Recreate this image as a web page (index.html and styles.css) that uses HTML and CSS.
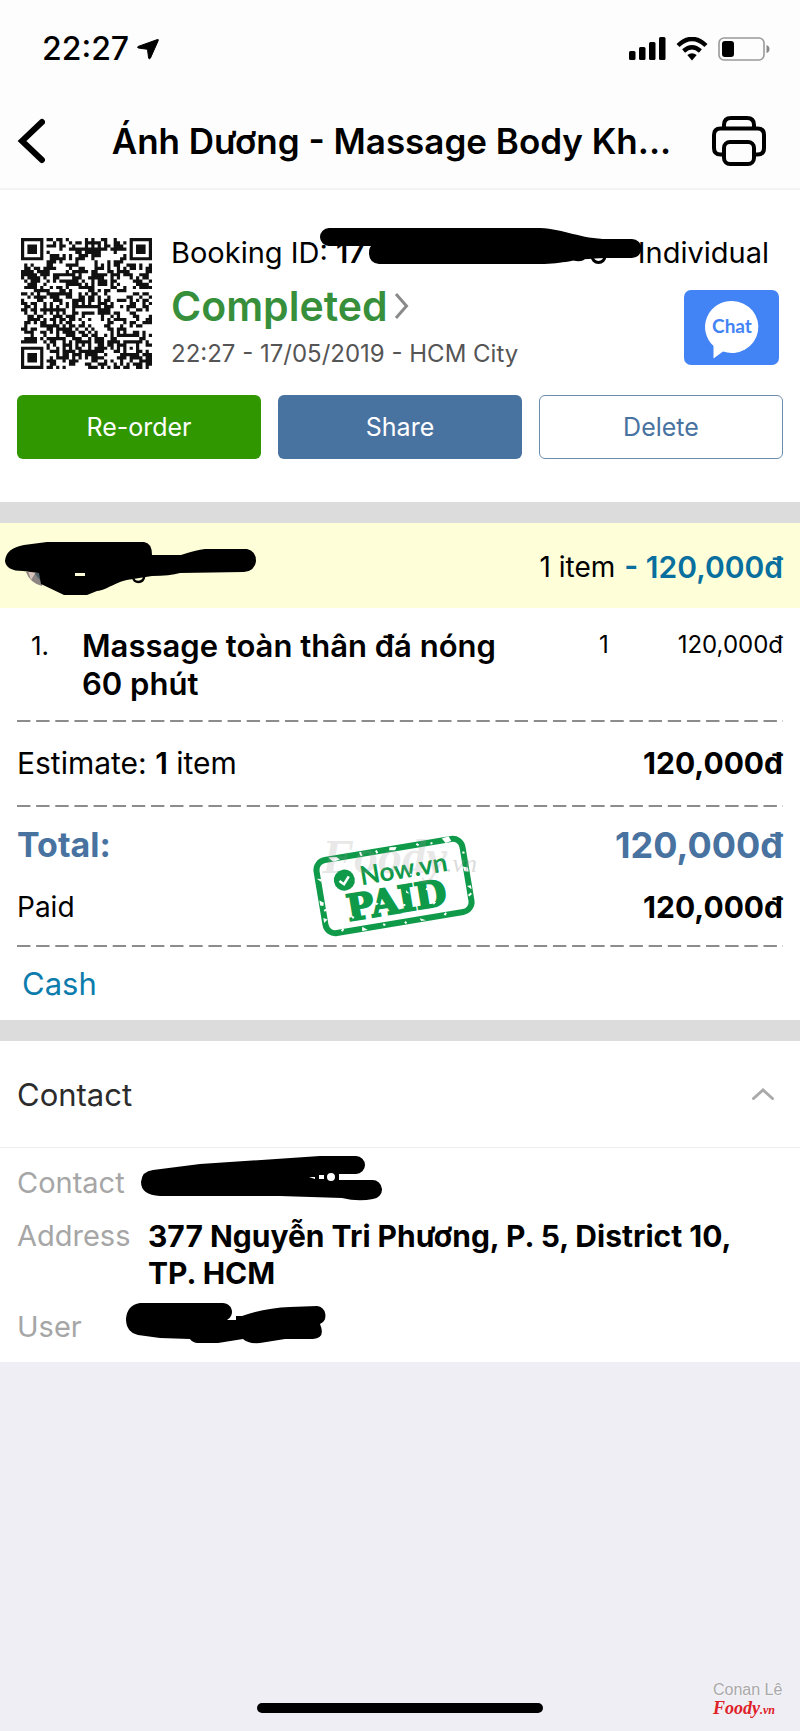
FILE: index.html
```html
<!DOCTYPE html>
<html lang="vi">
<head>
<meta charset="utf-8">
<meta name="viewport" content="width=device-width, initial-scale=1">
<title>Ánh Dương - Massage Body</title>
<link rel="stylesheet" href="styles.css">
</head>
<body>
<div class="page">
  <div class="status">
    <div class="status-left">
      <span class="clock">22:27</span>
      <svg width="22" height="22" viewBox="0 0 22 22"><path d="M20.500 1.500L1 8.500Q0 9.300 1.200 10L10.500 11.300L11.600 20.200Q12.400 21.400 13.400 20.200L21.300 2.400Q21.600 1.200 20.500 1.500Z" stroke="#000"/></svg>
    </div>
    <div class="status-right">
      <svg width="37" height="23" viewBox="0 0 37 23"><rect x="0" y="14" width="6.500" height="9" rx="1.500"/><rect x="10" y="10" width="6.500" height="13" rx="1.500"/><rect x="20" y="5" width="6.500" height="18" rx="1.500"/><rect x="30" y="0" width="6.500" height="23" rx="1.500"/></svg>
      <svg width="32" height="24" viewBox="0 0 32 24"><path d="M2 8.500Q16-4.500 30 8.500M7.600 14Q16 6.500 24.400 14" fill="none" stroke="#000" stroke-width="4.400"/><path d="M11.300 18Q16 14.500 20.700 18L16 23.500Z"/></svg>
      <svg width="52" height="24" viewBox="0 0 52 24"><rect x="1" y="1" width="45" height="22" rx="5" fill="none" stroke="#999" stroke-width="1.600"/><rect x="4" y="4" width="12" height="16" rx="3"/><path d="M48.500 8Q51.500 9 51.500 12T48.500 16Z" fill="#888"/></svg>
    </div>
  </div>

  <header class="nav">
    <button class="icon-btn" aria-label="Back"><svg width="28" height="46" viewBox="0 0 28 46"><path d="M25 4L5 23L25 42" fill="none" stroke="#000" stroke-width="6" stroke-linecap="round"/></svg></button>
    <h1 class="title">Ánh Dương - Massage Body Kh...</h1>
    <button class="icon-btn" aria-label="Print"><svg width="54" height="50" viewBox="0 0 54 50" fill="none" stroke="#000" stroke-width="4"><path d="M12 12V9Q12 2 19 2H35Q42 2 42 9V12M11 38.500H8.500Q2 38.500 2 32V19Q2 12.500 8.500 12.500H45.500Q52 12.500 52 19V32Q52 38.500 45.500 38.500H43"/><rect x="12" y="26" width="30" height="22" rx="6"/></svg></button>
  </header>

  <section class="booking">
    <div class="summary">
      <svg class="qr" id="qr" viewBox="0 0 41 41" role="img" aria-label="QR code"></svg>
      <div class="info">
        <div class="id-row">
          <span>Booking ID: <b>17</b></span><span>Individual</span>
          <svg class="scribble id-mark" width="330" height="45" viewBox="318 227 330 45"><path d="M329 228H540C565 229 580 239 608 239H632A9.500 9.500 0 0 1 632 258H606C570 259 565 264 540 264H379Q369 263 369 253Q369 248 371 246H329A9 9 0 0 1 329 228Z"/><path d="M553 257a7 6 0 0 0 13 0M572 256a7 6 0 0 0 13 0M592 256a6.500 6.500 0 0 0 13 0" fill="none" stroke="#000" stroke-width="3"/></svg>
        </div>
        <div class="state-row">
          <div>
            <a href="#" class="state">Completed<svg width="15" height="28" viewBox="0 0 15 28"><path d="M2 2L12.500 14L2 26" fill="none" stroke="#8a8a8a" stroke-width="3"/></svg></a>
            <div class="date">22:27 - 17/05/2019 - HCM City</div>
          </div>
          <button class="chat" aria-label="Chat"><svg width="95" height="75" viewBox="0 0 95 75"><path d="M48.500 11A26.500 26 0 1 1 39 61.500L29.500 68.500V56A26.500 26 0 0 1 48.500 11Z" fill="#fff"/><text x="48" y="43" text-anchor="middle" class="chat-text">Chat</text></svg></button>
        </div>
      </div>
    </div>
    <div class="actions">
      <button class="btn green">Re-order</button>
      <button class="btn blue">Share</button>
      <button class="btn outline">Delete</button>
    </div>
  </section>

  <section class="order">
    <div class="group">
      <svg class="scribble group-mark" width="256" height="60" viewBox="3 540 256 60"><path d="M26 572H44L42 586Q30 583 26 572Z" fill="#8d8584"/><path d="M34 573L43 572V584Z" fill="#52606a"/><path d="M28 571L36 572L31 580Z" fill="#d9c4bb"/><path fill-rule="evenodd" d="M5 561Q6 548 24 545L47 542H144Q152 543 152 555H181Q196 550 205 549H247Q256 551 256 561Q255 571 244 572L180 573Q170 576 152 576L133 579C115 581 108 590 97 591L87 595H64L41 584L39 573L23 571Q6 571 5 561ZM75 573V576H85V573Z"/><path d="M133 577a5.500 5 0 0 0 11 0" fill="none" stroke="#000" stroke-width="2.500"/></svg>
      <span class="count">1 item</span><b class="amount">- 120,000đ</b>
    </div>
    <div class="item">
      <span class="no">1.</span>
      <b class="name">Massage toàn thân đá nóng 60 phút</b>
      <span class="qty">1</span>
      <span class="price">120,000đ</span>
    </div>
    <div class="dash"></div>
    <div class="row"><span>Estimate: <b>1</b> item</span><b class="sum">120,000đ</b></div>
    <div class="dash"></div>
    <div class="totals">
      <div class="total"><span>Total:</span><span class="grand">120,000đ</span></div>
      <div class="paid"><span>Paid</span><b class="sum">120,000đ</b></div>
      <svg class="stamp" width="172" height="116" viewBox="0 0 172 116">
        <g transform="translate(82 57) rotate(-9.500)">
          <rect x="-74" y="-37" width="148" height="74" rx="10" fill="none" stroke="#0e9a49" stroke-width="6"/>
          <circle cx="-48" cy="-14" r="10.500" fill="#0e9a49"/>
          <path d="M-53-14L-49-10L-43-17" fill="none" stroke="#fff" stroke-width="2.500"/>
          <text x="-32" y="-6" class="stamp-brand">Now.vn</text>
          <text x="0" y="27" text-anchor="middle" class="stamp-paid">PAID</text>
          <path d="M-60-39l8 1 3 3-7 1zM2-39l7 1-2 3-6-1zM55-39l7-1 2 5-6 1zM71-8l5 2v4l-4-1zM72 12h4v4zM-76 2l4 3-1 3-3-1zM-75-20l4 1v3zM-71 22l-4 3v-5zM20 36l6 3h-5zM-38 35l5 4h-6zM-22 12l4 3-3 1zM11 6l3 4-3-1zM35 21l4 2-3 2zM-47 22l3 2-2 2z" fill="#fff"/>
          <path d="M-28-39l1 4M-12-38l1 3M29-38l2 2M44-37v2M73-22l2 1M75 20l-3 2M45 37l2-2M5 37l1 2M-17 36l2 1M-59 36l2-2M-73 13l3-1M-25-12l2 1M18-9l1 1M31 8l2 1M-35 8l1 2M6 20l2 1" stroke="#fff" stroke-width="2" fill="none"/>
        </g>
        <text x="10" y="44" class="mark-big">Foody</text><text x="134" y="43" class="mark-small">.vn</text>
      </svg>
    </div>
    <div class="dash"></div>
    <div class="cash"><a href="#">Cash</a></div>
  </section>

  <section class="contact">
    <button class="contact-head"><span>Contact</span><svg width="22" height="12" viewBox="0 0 22 12"><path d="M1.500 10.500L11 2L20.500 10.500" fill="none" stroke="#aaa" stroke-width="3" stroke-linecap="round"/></svg></button>
    <dl class="details">
      <dt>Contact</dt><dd><svg class="scribble contact-mark" width="246" height="48" viewBox="138 1154 246 48"><path fill-rule="evenodd" d="M153 1170L200 1164L320 1156H356A9 9 0 0 1 356 1174H339V1180L372 1180A9.500 9.500 0 0 1 373 1199Q358 1202 342 1198L280 1196H160Q141 1195 141 1182Q142 1171 153 1170ZM309 1177L315 1179V1177ZM319 1175V1179H324V1175ZM327 1177A4 4 0 1 0 335 1177A4 4 0 1 0 327 1177Z"/></svg></dd>
      <dt>Address</dt><dd><b class="address">377 Nguyễn Tri Phương, P. 5, District 10, TP. HCM</b></dd>
      <dt>User</dt><dd><svg class="scribble user-mark" width="208" height="46" viewBox="123 1298 208 46"><path d="M140 1301H222A9 9 0 0 1 227 1318L236 1318V1314L242 1314Q265 1306 290 1305L317 1304A9.500 9.500 0 0 1 320 1322Q326 1336 313 1337L285 1337L260 1341Q248 1342 243 1337L218 1341H197Q192 1340 190 1337L160 1336L138 1333Q126 1330 126 1317Q127 1303 140 1301Z"/></svg></dd>
    </dl>
  </section>

  <footer class="footer">
    <div class="credit"><span class="author">Conan Lê</span><span class="foody">Foody<small>.vn</small></span></div>
    <div class="home"></div>
  </footer>
</div>
<script src="qr.js"></script>
</body>
</html>
```
FILE: styles.css
```css
* { box-sizing: border-box; }
body { margin: 0; background: #efeef4; color: #000; font-family: Inter, "Noto Sans", sans-serif; font-size: 29px; }
button { font: inherit; color: inherit; border: 0; padding: 0; background: none; cursor: pointer; }
a { text-decoration: none; color: inherit; }
b { font-weight: 600; }
svg { display: block; flex: none; }

.page { min-height: 100vh; display: flex; flex-direction: column; }
.scribble { position: absolute; }

.status { height: 97px; padding: 0 30px 0 42px; background: #fdfdfd; display: flex; align-items: center; justify-content: space-between; }
.status-left, .status-right { display: flex; align-items: center; gap: 10px; }
.status-left { gap: 8px; }
.clock { font-size: 32px; font-weight: 500; }

.nav { height: 93px; padding: 0 34px 4px 17px; background: #fdfdfd; border-bottom: 2px solid #f3f3f3; display: flex; align-items: center; }
.icon-btn { flex: none; }
.title { flex: 1; margin: 0; padding-left: 26px; font-size: 35px; font-weight: 600; text-align: center; white-space: nowrap; }

.booking { background: #fff; padding: 37px 17px 43px; border-bottom: 21px solid #dcdcdc; }
.summary { display: flex; gap: 19px; }
.qr { width: 131px; height: 131px; margin: 11px 0 0 4px; }
.info { flex: 1; min-width: 0; }
.id-row { position: relative; display: flex; justify-content: space-between; line-height: 52px; padding-right: 14px; }
.id-mark { left: 147px; top: 0; }
.state-row { display: flex; justify-content: space-between; padding-right: 4px; }
.state { display: flex; align-items: center; gap: 6px; font-size: 41px; font-weight: 600; line-height: 54px; color: #378f3c; }
.date { font-size: 24px; line-height: 42px; color: #555; }
.chat { width: 95px; height: 75px; margin-top: 11px; border-radius: 7px; background: #4283f5; overflow: hidden; }
.chat-text { font: 700 19px Lato, sans-serif; fill: #4283f5; }
.actions { display: grid; grid-template-columns: repeat(3, 1fr); gap: 17px; margin-top: 20px; }
.btn { height: 64px; border-radius: 6px; font-size: 25px; }
.green { background: #309700; color: #fff; }
.blue { background: #48729f; color: #fff; }
.outline { background: #fff; color: #48729f; border: 1px solid #6d8cad; }

.order { background: #fff; border-bottom: 21px solid #dcdcdc; }
.group { position: relative; height: 85px; padding: 2px 17px 0; background: #fefed8; display: flex; align-items: center; justify-content: flex-end; gap: 9px; }
.group-mark { left: 3px; top: 17px; }
.count { font-size: 28px; }
.amount { font-size: 30px; color: #086f9f; }
.item { padding: 19px 17px 17px; display: grid; grid-template-columns: 65px 1fr 92px 120px; line-height: 38px; }
.no { font-size: 26px; padding-left: 14px; }
.name { font-size: 31px; padding-right: 64px; }
.qty { font-size: 24px; padding-left: 28px; line-height: 36px; }
.price { font-size: 24px; text-align: right; line-height: 36px; }
.dash { height: 2px; margin: 0 17px; background: linear-gradient(to right, #8c8c8c 68%, transparent 68%) 0 0 / 2.5% 2px repeat-x; }
.row, .total, .paid { display: flex; justify-content: space-between; padding: 0 17px; }
.row { line-height: 83px; font-size: 30px; }
.sum { font-size: 30px; font-weight: 700; }
.totals { position: relative; padding-top: 14px; }
.total { font-size: 34px; font-weight: 700; line-height: 48px; color: #48729f; }
.grand { font-size: 36px; }
.paid { font-size: 28px; line-height: 76px; }
.stamp { position: absolute; left: calc(50% - 88px); top: 22px; overflow: visible; }
.stamp-brand { font: 700 26px Lato, sans-serif; fill: #0e9a49; }
.stamp-paid { font: 700 36px "DejaVu Serif", serif; fill: #0e9a49; stroke: #0e9a49; stroke-width: 2px; }
.mark-big { font: italic 700 48px "Liberation Serif", serif; fill: #999; fill-opacity: .22; }
.mark-small { font: italic 26px "Liberation Serif", serif; fill: #999; fill-opacity: .35; }
.cash { padding: 0 22px; font-size: 31px; line-height: 73px; color: #0c7cad; }

.contact { background: #fff; }
.contact-head { width: 100%; height: 107px; padding: 0 26px 0 17px; border-bottom: 1px solid #eee; display: flex; align-items: center; justify-content: space-between; font-size: 31px; color: #2c2c2c; }
.details { margin: 0; padding: 17px; display: grid; grid-template-columns: 131px 1fr; row-gap: 17px; line-height: 36px; }
.details dt { color: #a6a6a6; }
.details dd { margin: 0; position: relative; }
.address { font-size: 30px; font-weight: 700; }
.contact-mark { left: -10px; top: -11px; }
.user-mark { left: -25px; top: -9px; }

.footer { margin-top: auto; padding: 0 17px 18px; }
.credit { display: flex; flex-direction: column; width: 70px; margin-left: auto; height: 22px; white-space: nowrap; }
.author { font: 16px/18px "Liberation Sans", sans-serif; color: #a9a9a9; text-shadow: 0 0 2px #fff; }
.foody { font: italic 700 18px/18px "Liberation Serif", serif; color: #df2027; }
.foody small { font-size: 12px; }
.home { width: 286px; height: 10px; margin: 0 auto; border-radius: 5px; background: #000; }
```
FILE: qr.js
```javascript
// Draws a 41 x 41 module code: three finders, one alignment mark and a data field.
const size = 41;
let seed = 17052019;
function bit() {
  seed = (seed * 1103515245 + 12345) % 2147483648;
  return (seed >> 16) % 100 < 52;
}
function ring(r, c, cr, cc) {
  return Math.max(Math.abs(r - cr), Math.abs(c - cc));
}
let d = "";
for (let r = 0; r < size; r++) {
  for (let c = 0; c < size; c++) {
    let on = bit();
    for (const [cr, cc] of [[3, 3], [3, 37], [37, 3]]) {
      const k = ring(r, c, cr, cc);
      if (k <= 4) on = k !== 2 && k !== 4;
    }
    const a = ring(r, c, 34, 34);
    if (a <= 2) on = a !== 1;
    if (on) d += `M${c} ${r}h1v1h-1z`;
  }
}
const path = document.createElementNS("http://www.w3.org/2000/svg", "path");
path.setAttribute("d", d);
path.setAttribute("fill", "#111");
document.getElementById("qr").appendChild(path);
```
